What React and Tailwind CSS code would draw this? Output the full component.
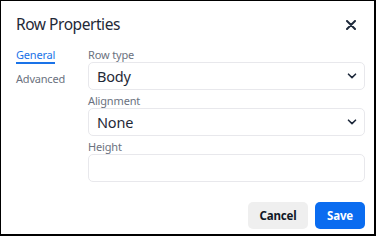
import { useState } from 'react';

function Chevron() {
  return (
    <svg width="10" height="6" viewBox="0 0 10 6" fill="none" className="text-[#1e293b]">
      <path d="M1.5 1.2 L5 4.6 L8.5 1.2" stroke="currentColor" strokeWidth="1.6" strokeLinecap="round" strokeLinejoin="round" />
    </svg>
  );
}

function SelectBox({ value }) {
  return (
    <div className="flex h-[28px] items-center justify-between rounded-[5px] border border-[#e8e8ec] pl-[8px] pr-[7px]">
      <span className="text-[14.5px] leading-none tracking-[-0.2px] text-[#1f2937]">{value}</span>
      <Chevron />
    </div>
  );
}

function Field({ label, children }) {
  return (
    <div className="flex flex-col">
      <label className="h-[16px] pt-px text-[11px] leading-[16px] tracking-[-0.15px] text-[#6b7280]">{label}</label>
      {children}
    </div>
  );
}

export default function App() {
  const [tab, setTab] = useState('General');

  return (
    <div
      className="flex h-[236px] w-[376px] flex-col border-t border-l border-r-2 border-b-2 border-black bg-white"
      style={{ fontFamily: '"Noto Sans", "Open Sans", sans-serif' }}
    >
      {/* Header */}
      <div className="flex h-[45px] items-center justify-between pt-[3px] pl-[15px] pr-[15px]">
        <h2 className="text-[15.5px] font-normal tracking-[-0.45px] text-[#1f2937]">Row Properties</h2>
        <button className="flex h-4 w-4 items-center justify-center text-[#1e293b]">
          <svg width="10" height="10" viewBox="0 0 10 10" fill="none">
            <path d="M1 1 L9 9 M9 1 L1 9" stroke="currentColor" strokeWidth="2" strokeLinecap="round" />
          </svg>
        </button>
      </div>

      {/* Body */}
      <div className="flex pr-[9px]">
        <nav className="flex w-[87px] flex-col gap-[6px] pl-[15px]">
          {['General', 'Advanced'].map((name) => (
            <button
              key={name}
              onClick={() => setTab(name)}
              className={
                tab === name
                  ? 'w-fit border-b-2 border-[#1a73e8] pt-px text-left text-[11px] leading-[15px] tracking-[-0.2px] text-[#1a73e8]'
                  : 'w-fit pt-px text-left text-[11px] leading-[15px] tracking-[-0.2px] text-[#6b7280]'
              }
            >
              {name}
            </button>
          ))}
        </nav>

        <div className="flex flex-1 flex-col gap-[2px]">
          <Field label="Row type">
            <SelectBox value="Body" />
          </Field>
          <Field label="Alignment">
            <SelectBox value="None" />
          </Field>
          <Field label="Height">
            <input className="h-[28px] rounded-[5px] border border-[#e8e8ec] px-[8px] text-[14.5px] outline-none" />
          </Field>
        </div>
      </div>

      {/* Footer */}
      <div className="mt-[20px] flex justify-end gap-[7px] pr-[9px]">
        <button className="h-[27px] w-[60px] rounded-[5px] bg-[#efefef] text-[11.5px] font-bold tracking-[-0.2px] text-[#111827]">
          Cancel
        </button>
        <button className="h-[27px] w-[50px] rounded-[5px] bg-[#0a6cf0] text-[11.5px] font-bold tracking-[-0.2px] text-white">
          Save
        </button>
      </div>
    </div>
  );
}
